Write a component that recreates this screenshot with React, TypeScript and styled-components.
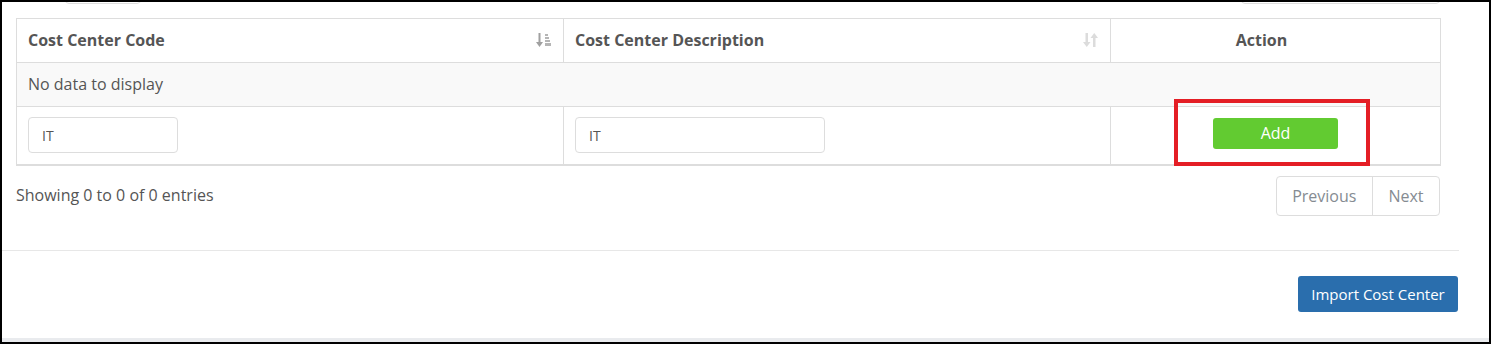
import React from 'react';
import styled, { createGlobalStyle } from 'styled-components';

const GlobalStyle = createGlobalStyle`
    html, body {
        margin: 0;
        padding: 0;
        background: #fff;
    }
    * {
        box-sizing: border-box;
    }
`

const Frame = styled.div`
    width: 1491px;
    height: 344px;
    border: 2px solid #000;
    overflow: hidden;
    background: #fff;
    display: flex;
    flex-direction: column;
    font-family: "Open Sans", "Liberation Sans", sans-serif;
    color: #555;
`

const Card = styled.div`
    width: 1457px;
    background: #fff;
    display: flex;
    flex-direction: column;
`

const CardBody = styled.div`
    padding: 0 19px 34px 14px;
`

const Controls = styled.div`
    height: 34px;
    margin-top: -32px;
    display: flex;
    justify-content: space-between;
    align-items: stretch;
`

const ControlBox = styled.div<{ $offset: number; $width: number }>`
    margin-left: ${p => p.$offset}px;
    width: ${p => p.$width}px;
    border: 1px solid #ddd;
    border-radius: 4px;
`

const Table = styled.table`
    margin-top: 14px;
    width: 1424px;
    border-collapse: collapse;
    table-layout: fixed;
    border-bottom: 2px solid #ddd;
`

const Th = styled.th<{ $center?: boolean }>`
    height: 44px;
    padding: 0 ${p => (p.$center ? 39 : 11)}px 2px 11px;
    border: 1px solid #ddd;
    font-size: 16px;
    font-weight: 700;
    color: #555;
    text-align: ${p => (p.$center ? 'center' : 'left')};
    vertical-align: middle;
`

const HeadInner = styled.div`
    display: flex;
    justify-content: space-between;
    align-items: center;
`

const IconSlot = styled.span`
    display: flex;
    margin-top: 1px;
`

const Td = styled.td<{ $muted?: boolean; $center?: boolean }>`
    border: 1px solid #ddd;
    padding: 0 11px;
    font-size: 16px;
    color: #555;
    background: ${p => (p.$muted ? '#f9f9f9' : '#fff')};
    text-align: ${p => (p.$center ? 'center' : 'left')};
    vertical-align: middle;
    position: relative;
`

const EmptyRow = styled.tr`
    height: 44px;
    td {
        padding-bottom: 1px;
    }
`

const InputRow = styled.tr`
    height: 58px;
`

const TextInput = styled.input<{ $wide?: boolean }>`
    display: block;
    width: ${p => (p.$wide ? 250 : 150)}px;
    height: 36px;
    padding: 0 13px;
    border: 1px solid #ddd;
    border-radius: 4px;
    font-family: "Open Sans", "Liberation Sans", sans-serif;
    font-size: 14px;
    color: #555;
    background: #fff;
    outline: none;
`

const AddButton = styled.button`
    width: 125px;
    height: 31px;
    margin-top: -4px;
    border: none;
    border-radius: 3px;
    background: #62cb31;
    color: #fff;
    font-family: "Open Sans", "Liberation Sans", sans-serif;
    font-size: 16px;
    cursor: pointer;
`

const Highlight = styled.div`
    position: absolute;
    left: 63px;
    top: -8px;
    width: 196px;
    height: 67px;
    border: 4px solid #e41e25;
    pointer-events: none;
`

const InfoRow = styled.div`
    margin-top: 10px;
    display: flex;
    justify-content: space-between;
    align-items: center;
    font-size: 16px;
    color: #555;
`

const Info = styled.div`
    margin-top: -1px;
`

const Pager = styled.div`
    display: flex;
    height: 40px;
    border: 1px solid #ddd;
    border-radius: 4px;
`

const PageLink = styled.span<{ $first?: boolean }>`
    display: flex;
    align-items: center;
    padding: 0 15.5px;
    color: #858b92;
    font-size: 16px;
    border-left: ${p => (p.$first ? 'none' : '1px solid #ddd')};
`

const CardFooter = styled.div`
    border-top: 1px solid #e7e7e7;
    padding: 25px 1px 26px 0;
    display: flex;
    justify-content: flex-end;
`

const PrimaryButton = styled.button`
    width: 160px;
    height: 36px;
    border: none;
    border-radius: 3px;
    background: #2a6ead;
    color: #fff;
    font-family: "Open Sans", "Liberation Sans", sans-serif;
    font-size: 15px;
`

const BottomStrip = styled.div`
    flex: 1;
    background: #e9ebee;
`

const SortedIcon = () => (
    <svg width="17" height="16" viewBox="0 0 17 16">
        <rect x="3.5" y="1" width="2" height="10" fill="#a0a0a0" />
        <polygon points="1,10 8,10 4.5,15" fill="#a0a0a0" />
        <rect x="10" y="2" width="3" height="2" fill="#b5b5b5" />
        <rect x="10" y="5" width="4" height="2" fill="#b5b5b5" />
        <rect x="10" y="8" width="5" height="2" fill="#b5b5b5" />
        <rect x="10" y="11" width="6" height="3" fill="#b5b5b5" />
    </svg>
)

const UnsortedIcon = () => (
    <svg width="17" height="16" viewBox="0 0 17 16">
        <rect x="3.5" y="1" width="2.5" height="10" fill="#dcdcdc" />
        <polygon points="1,10 8.5,10 4.75,15" fill="#dcdcdc" />
        <rect x="11" y="5" width="2.5" height="10" fill="#dcdcdc" />
        <polygon points="8.5,6 16,6 12.25,1" fill="#dcdcdc" />
    </svg>
)

function App() {
    return (
        <Frame>
            <GlobalStyle />
            <Card>
                <CardBody>
                    <Controls>
                        <ControlBox $offset={49} $width={76} />
                        <ControlBox $offset={0} $width={199} />
                    </Controls>

                    <Table>
                        <colgroup>
                            <col style={{ width: 547 }} />
                            <col style={{ width: 547 }} />
                            <col style={{ width: 330 }} />
                        </colgroup>
                        <thead>
                            <tr>
                                <Th>
                                    <HeadInner>
                                        Cost Center Code
                                        <IconSlot><SortedIcon /></IconSlot>
                                    </HeadInner>
                                </Th>
                                <Th>
                                    <HeadInner>
                                        Cost Center Description
                                        <IconSlot><UnsortedIcon /></IconSlot>
                                    </HeadInner>
                                </Th>
                                <Th $center>Action</Th>
                            </tr>
                        </thead>
                        <tbody>
                            <EmptyRow>
                                <Td $muted colSpan={3}>No data to display</Td>
                            </EmptyRow>
                            <InputRow>
                                <Td>
                                    <TextInput defaultValue="IT" />
                                </Td>
                                <Td>
                                    <TextInput $wide defaultValue="IT" />
                                </Td>
                                <Td $center>
                                    <AddButton>Add</AddButton>
                                    <Highlight />
                                </Td>
                            </InputRow>
                        </tbody>
                    </Table>

                    <InfoRow>
                        <Info>Showing 0 to 0 of 0 entries</Info>
                        <Pager>
                            <PageLink $first>Previous</PageLink>
                            <PageLink>Next</PageLink>
                        </Pager>
                    </InfoRow>
                </CardBody>

                <CardFooter>
                    <PrimaryButton>Import Cost Center</PrimaryButton>
                </CardFooter>
            </Card>
            <BottomStrip />
        </Frame>
    );
}

export default App;
